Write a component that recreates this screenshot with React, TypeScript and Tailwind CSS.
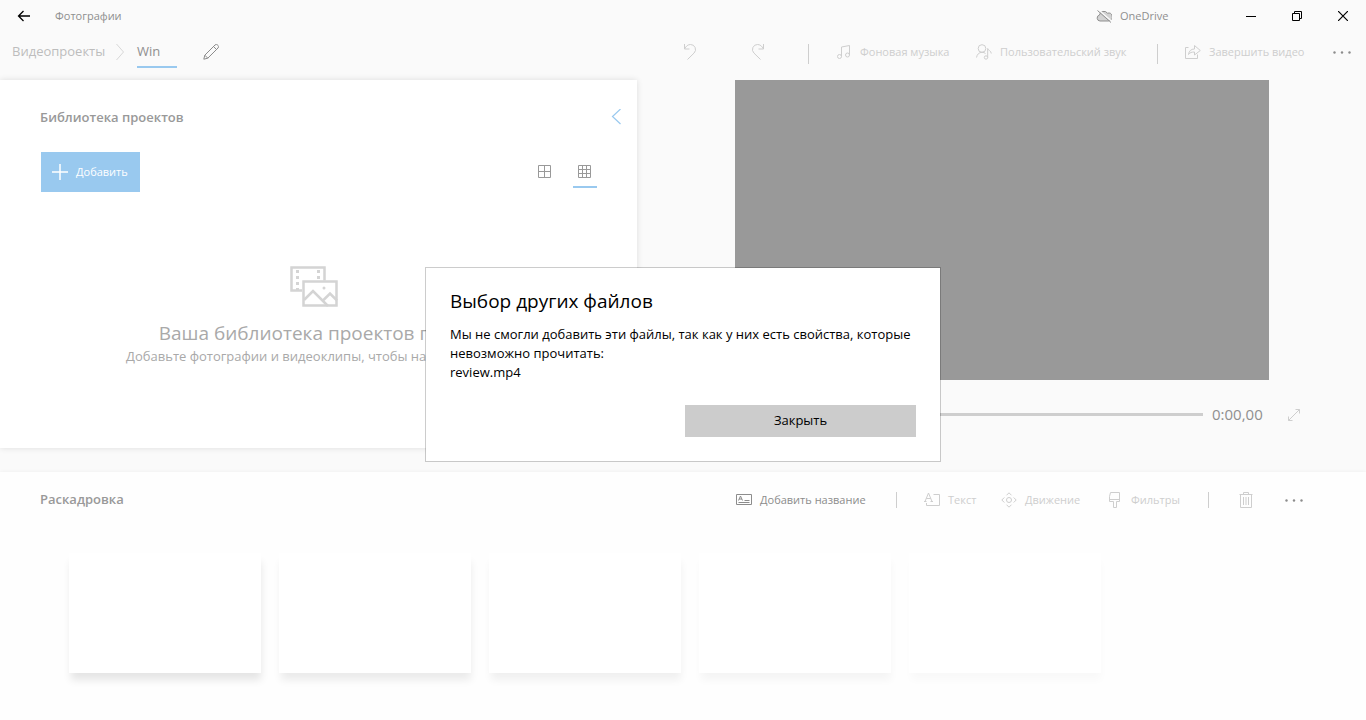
import type { ReactNode } from "react";

const storyboardCards = [
  "shadow-[1px_8px_8px_-1px_rgba(0,0,0,0.1)]",
  "shadow-[1px_8px_8px_-1px_rgba(0,0,0,0.08)]",
  "shadow-[1px_8px_8px_-1px_rgba(0,0,0,0.06)]",
  "shadow-[1px_8px_8px_-1px_rgba(0,0,0,0.04)]",
  "shadow-[1px_8px_8px_-1px_rgba(0,0,0,0.025)]",
];

function Icon({ size = 16, className = "", children }: { size?: number; className?: string; children: ReactNode }) {
  return (
    <svg
      width={size}
      height={size}
      viewBox={`0 0 ${size} ${size}`}
      fill="none"
      stroke="currentColor"
      className={`shrink-0 ${className}`}
      aria-hidden="true"
    >
      {children}
    </svg>
  );
}

function ToolButton({ label, width, active, children }: { label: string; width: string; active?: boolean; children: ReactNode }) {
  return (
    <button className={`flex items-center gap-2 text-[11px] whitespace-nowrap ${width} ${active ? "text-[#8c8c8c]" : "text-[#cecece]"}`}>
      {children}
      {label}
    </button>
  );
}

function Dots() {
  return (
    <svg width="20" height="4" viewBox="0 0 20 4" fill="currentColor" aria-hidden="true">
      <circle cx="2.500" cy="2.500" r="1.200" />
      <circle cx="10" cy="2.500" r="1.200" />
      <circle cx="17.500" cy="2.500" r="1.200" />
    </svg>
  );
}

function TitleBar() {
  return (
    <div className="flex h-8 items-center">
      <button aria-label="Назад" className="flex h-8 w-12 items-center justify-center text-black">
        <Icon><path d="M14 8H2.500M7.500 3L2.500 8l5 5" strokeWidth="1.300" /></Icon>
      </button>
      <span className="ml-[7px] text-[11px] leading-8 text-[#8f8f8f]">Фотографии</span>
      <div className="ml-auto flex w-[132px] items-center gap-2 text-[11px] leading-8 text-[#8f8f8f]">
        <Icon>
          <path d="M4 13a3 3 0 0 1-.6-5.900A4.500 4.500 0 0 1 11.500 5.200 3.500 3.500 0 0 1 13.500 12.400L12.500 13Z" fill="#d2d2d2" />
          <path d="M2 1.500L15.500 13" stroke="#fafafa" strokeWidth="1.500" />
          <path d="M1.500 2.500L15 14.500" />
        </Icon>
        OneDrive
      </div>
      <button aria-label="Свернуть" className="flex h-8 w-[46px] items-center justify-center text-black">
        <Icon size={10}><path d="M0 5.500H10" /></Icon>
      </button>
      <button aria-label="Восстановить" className="flex h-8 w-[46px] items-center justify-center text-black">
        <Icon size={10}><path d="M.5 2.500h7v7h-7zM2.500 2.500v-2h7v7h-2" /></Icon>
      </button>
      <button aria-label="Закрыть окно" className="flex h-8 w-[46px] items-center justify-center text-black">
        <Icon size={10}><path d="M0 0l10 10M10 0L0 10" strokeWidth="1.200" /></Icon>
      </button>
    </div>
  );
}

function Toolbar() {
  return (
    <div className="flex h-12 items-center justify-between pb-2">
      <nav className="flex items-center pl-3 text-[13px]">
        <a href="#projects" className="w-[102px] whitespace-nowrap text-[#bdbdbd]">Видеопроекты</a>
        <Icon className="text-[#d8d8d8]"><path d="M2.500 0l7 8-7 8" /></Icon>
        <a href="#win" className="ml-[7px] flex h-8 w-10 items-center border-b-2 border-[#99c9ef] pt-0.5 text-[#8f8f8f]">Win</a>
        <button aria-label="Переименовать" className="ml-[26px] text-[#8c8c8c]">
          <Icon>
            <path d="M.8 15.200l1-4L12 1a1.800 1.800 0 0 1 2.600 0l.4.400a1.800 1.800 0 0 1 0 2.600L4.800 14.200zM1.800 11.200l3 3M10.500 2.500l3 3" />
          </Icon>
        </button>
      </nav>
      <div className="flex items-center pr-[14px] text-[#cecece]">
        <button aria-label="Отменить" className="mr-[52px]">
          <Icon><path d="M2.500 0v5h5M2.500 5C4 2 6 .5 8.500 .5a5 5 0 0 1 3.600 8.500L5.500 15.500" /></Icon>
        </button>
        <button aria-label="Повторить" className="mr-[42px]">
          <Icon><path d="M13.500 0v5h-5M13.500 5C12 2 10 .5 7.500 .5A5 5 0 0 0 3.900 9L10.500 15.500" /></Icon>
        </button>
        <div className="mt-1 h-5 w-px bg-[#cecece]" />
        <div className="ml-[27px] flex">
          <ToolButton label="Фоновая музыка" width="w-[140px]">
            <Icon>
              <circle cx="3.500" cy="12.500" r="2" />
              <circle cx="11.500" cy="11" r="2" />
              <path d="M5.500 12.500V3l8-1.500V11" />
            </Icon>
          </ToolButton>
          <ToolButton label="Пользовательский звук" width="w-[181px]">
            <Icon>
              <circle cx="6" cy="4.500" r="3.800" />
              <path d="M.5 13.500C1 10.500 3 8.300 6 8.300c1.500 0 2.500.4 3.500 1.200" />
              <circle cx="10" cy="13.500" r="1.700" />
              <path d="M11.700 13.500V4.500c.5 2 3.300 2 3.600 5" />
            </Icon>
          </ToolButton>
        </div>
        <div className="mt-1 h-5 w-px bg-[#cecece]" />
        <div className="ml-[27px] flex">
          <ToolButton label="Завершить видео" width="w-[147px]">
            <Icon>
              <path d="M3.500 3.500h-3v11h12v-4" />
              <path d="M3.500 10.500c.5-3.500 2.500-5.500 6-5.500V1.500L15.300 6.500 9.500 11V8c-3 0-4.500.5-6 2.500z" />
            </Icon>
          </ToolButton>
        </div>
        <button aria-label="Ещё" className="text-[#8c8c8c]"><Dots /></button>
      </div>
    </div>
  );
}

function Library() {
  return (
    <section className="flex h-[368px] flex-col bg-white pr-[13px] pl-10 shadow-[0_0_6px_rgba(0,0,0,0.12)]">
      <div className="flex items-center justify-between pt-[26px]">
        <h2 className="text-[13px] leading-[22px] font-semibold text-[#999]">Библиотека проектов</h2>
        <button aria-label="Свернуть библиотеку" className="text-[#99c9ef]">
          <Icon><path d="M12.500 0L4.500 7.500l8 7.500" strokeWidth="1.200" /></Icon>
        </button>
      </div>
      <div className="mt-6 flex items-center justify-between pr-[27px] pl-px">
        <button className="flex h-10 w-[99px] items-center gap-2 bg-[#99c9ef] pl-[11px] text-[11px] whitespace-nowrap text-white">
          <Icon><path d="M0 8h16M8 0v16" strokeWidth="1.500" /></Icon>
          Добавить
        </button>
        <div className="flex gap-4 text-[#999]">
          <button aria-label="Крупные эскизы" className="flex h-8 w-6 items-center justify-center">
            <Icon><path d="M1.500 1.500h12v12h-12zM7.500 1.500v12M1.500 7.500h12" /></Icon>
          </button>
          <button aria-label="Мелкие эскизы" className="flex h-8 w-6 items-center justify-center border-b-2 border-[#99c9ef] pt-0.5">
            <Icon><path d="M1.500 1.500h12v12h-12zM5.500 1.500v12M9.500 1.500v12M1.500 5.500h12M1.500 9.500h12" /></Icon>
          </button>
        </div>
      </div>
      <div className="mt-[74px] -ml-9 flex flex-col items-center whitespace-nowrap text-[#a9a9a9]">
        <svg width="48" height="42" viewBox="0 0 48 42" fill="none" stroke="#d4d4d4" aria-hidden="true">
          <path d="M12 24.500H1.500v-23h33v13" strokeWidth="2.500" />
          <path d="M7.500 4v20M28.500 4v10" strokeWidth="3" strokeDasharray="3 3" />
          <path d="M13.500 15.500h33v24h-33z" strokeWidth="2.500" />
          <path d="M14 34l9-9 15 15M33 34.500l7-7 7 7" strokeWidth="2.500" />
          <circle cx="34" cy="22" r="1.500" fill="#d4d4d4" stroke="none" />
        </svg>
        <p className="mt-[9px] text-[19px] leading-8">Ваша библиотека проектов пуста</p>
        <p className="text-[13px] leading-[14px]">Добавьте фотографии и видеоклипы, чтобы начать работу</p>
      </div>
    </section>
  );
}

function Player() {
  return (
    <section className="pr-16 pl-[98px]">
      <div className="mr-[33px] aspect-[534/300] bg-[#999]" />
      <div className="flex h-[69px] items-center text-[#cecece]">
        <button aria-label="Воспроизвести" className="mr-6">
          <Icon><path d="M3.500 1.500l10 6.500-10 6.500z" /></Icon>
        </button>
        <input
          type="range"
          aria-label="Позиция воспроизведения"
          min={0}
          max={100}
          defaultValue={0}
          className="h-[3px] min-w-0 flex-1 appearance-none bg-[#cecece] [&::-webkit-slider-thumb]:h-6 [&::-webkit-slider-thumb]:w-2 [&::-webkit-slider-thumb]:appearance-none [&::-webkit-slider-thumb]:rounded-sm [&::-webkit-slider-thumb]:bg-[#99c9ef]"
        />
        <span className="ml-[9px] w-[74px] text-[15px] text-[#8f8f8f]">0:00,00</span>
        <button aria-label="Во весь экран">
          <Icon><path d="M2.500 13.500l11-11M9.500 2.500h4v4M2.500 9.500v4h4" /></Icon>
        </button>
      </div>
    </section>
  );
}

function Storyboard() {
  return (
    <section className="flex-1 overflow-hidden bg-[#fefefe] pb-8 shadow-[0_0_4px_rgba(0,0,0,0.05)]">
      <div className="flex h-14 items-center justify-between pr-[62px] pl-10">
        <h2 className="text-[13px] font-semibold text-[#999]">Раскадровка</h2>
        <div className="flex items-center text-[#cecece]">
          <ToolButton label="Добавить название" width="w-[160px]" active>
            <Icon>
              <path d="M.5 2.500h15v10H.5zM2.500 10.500h11M8.500 8.500h5M2.500 8.500L4.500 4l2 4.500M3 7h3" />
            </Icon>
          </ToolButton>
          <div className="h-4 w-px bg-[#cecece]" />
          <div className="ml-[27px] flex">
            <ToolButton label="Текст" width="w-[77px]">
              <Icon>
                <path d="M1 9.500L4.500 1l3.500 8.500M2.300 6.500h4.400M0 9.500h2.500M6.500 9.500H9M9.500 2.500h6v11h-13V11" />
              </Icon>
            </ToolButton>
            <ToolButton label="Движение" width="w-[106px]">
              <Icon>
                <circle cx="8" cy="8" r="2.500" />
                <path d="M5.500 3.300L8 .8l2.500 2.500M5.500 12.700L8 15.200l2.500-2.500M3.300 5.500L.8 8l2.500 2.500M12.700 5.500L15.200 8l-2.500 2.500" />
              </Icon>
            </ToolButton>
            <ToolButton label="Фильтры" width="w-[101px]">
              <Icon>
                <path d="M3.500 .5h9v9h-3v6h-3v-6h-4v-5l1-4zM2.500 7.500h10" />
              </Icon>
            </ToolButton>
          </div>
          <div className="h-4 w-px bg-[#cecece]" />
          <button aria-label="Удалить" className="mr-[30px] ml-[29px]">
            <Icon><path d="M1.500 2.500h13M5.500 2.500v-2h5v2M2.500 2.500v13h11v-13M5.500 5v8M8 5v8M10.500 5v8" /></Icon>
          </button>
          <button aria-label="Ещё" className="text-[#8c8c8c]"><Dots /></button>
        </div>
      </div>
      <div className="flex gap-[18px] pt-[25px] pl-[69px]">
        {storyboardCards.map((shadow, i) => (
          <div key={i} className={`h-[120px] w-48 shrink-0 bg-white ${shadow}`} />
        ))}
      </div>
    </section>
  );
}

function FileErrorDialog() {
  return (
    <div className="fixed inset-0 flex items-center justify-center pt-[9px]">
      <div
        role="dialog"
        aria-modal="true"
        aria-labelledby="dialog-title"
        className="w-[516px] border border-black/20 bg-white bg-clip-padding px-6 pt-[18px] pb-6 text-black"
      >
        <h1 id="dialog-title" className="text-[19px] leading-[30px]">Выбор других файлов</h1>
        <p className="mt-[9px] text-[13px] leading-[19px]">
          Мы не смогли добавить эти файлы, так как у них есть свойства, которые невозможно прочитать:
          <br />
          review.mp4
        </p>
        <div className="mt-[23px] flex justify-end">
          <button className="h-8 w-[231px] bg-[#ccc] text-[13px]">Закрыть</button>
        </div>
      </div>
    </div>
  );
}

export default function App() {
  return (
    <div className="flex min-h-screen flex-col bg-[#fafafa] font-['Open_Sans','Noto_Sans',sans-serif]">
      <TitleBar />
      <Toolbar />
      <main className="grid grid-cols-[637fr_729fr] pb-[23px]">
        <Library />
        <Player />
      </main>
      <Storyboard />
      <FileErrorDialog />
    </div>
  );
}
